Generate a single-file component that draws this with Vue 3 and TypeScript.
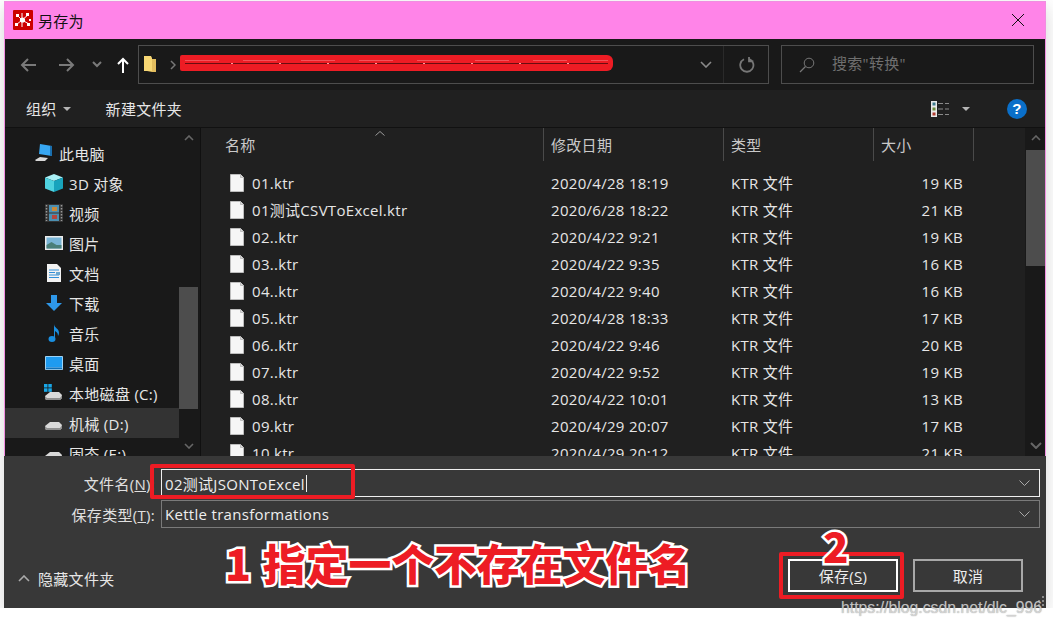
<template>
  <div class="window">
    <header class="titlebar">
      <svg class="app-icon" width="20" height="20" viewBox="0 0 20 20">
        <rect width="20" height="20" rx="1" fill="#cc0000" />
        <path d="M9 10 4 5M9 10l6-5M9 10l-6 5M9 10l7 4M9 10V3M9 10v7" stroke="#fff" stroke-width="1" />
        <g fill="#fff">
          <circle cx="9.500" cy="10" r="2.600" />
          <rect x="3" y="4" width="3" height="3" />
          <rect x="13" y="3" width="3" height="3" />
          <rect x="2" y="13" width="3" height="3" />
          <rect x="14" y="13" width="3" height="3" />
          <rect x="16" y="9" width="2" height="2" />
        </g>
      </svg>
      <span class="title">另存为</span>
      <svg class="close" width="14" height="14" viewBox="0 0 14 14">
        <path d="M1 1l12 12M13 1 1 13" stroke="#111" stroke-width="1" fill="none" />
      </svg>
    </header>

    <div class="navbar">
      <div class="nav-btns">
        <svg width="16" height="14" viewBox="0 0 16 14"><path d="M16 7H2M8 1 2 7l6 6" stroke="#7a7a7a" stroke-width="2" fill="none" /></svg>
        <svg class="fwd" width="16" height="14" viewBox="0 0 16 14"><path d="M0 7h14M8 1l6 6-6 6" stroke="#7a7a7a" stroke-width="2" fill="none" /></svg>
        <svg class="hist" width="10" height="7" viewBox="0 0 10 7"><path d="M1 1l4 4 4-4" stroke="#7a7a7a" stroke-width="2" fill="none" /></svg>
        <svg class="up" width="12" height="16" viewBox="0 0 12 16"><path d="M6 16V2M1 7l5-5 5 5" stroke="#fff" stroke-width="2" fill="none" /></svg>
      </div>
      <div class="address">
        <svg width="13" height="17" viewBox="0 0 13 17">
          <path d="M0 0h7l1 2v13H0z" fill="#f7d774" />
          <path d="M8 3h4v13H3l5-1z" fill="#e3bd5e" />
        </svg>
        <svg class="crumb" width="6" height="10" viewBox="0 0 6 10"><path d="M1 1l4 4-4 4" stroke="#777" stroke-width="1.500" fill="none" /></svg>
        <span class="addr-spacer"></span>
        <svg class="addr-drop" width="12" height="7" viewBox="0 0 12 7"><path d="M1 1l5 5 5-5" stroke="#8a8a8a" stroke-width="1.600" fill="none" /></svg>
        <span class="addr-sep"></span>
        <svg class="refresh" width="16" height="16" viewBox="0 0 16 16"><path d="M10.200 2A6.600 6.600 0 1 1 5 2.200M10 0v4.400H14.400" stroke="#777" stroke-width="1.800" fill="none" /></svg>
      </div>
      <div class="search">
        <svg width="16" height="16" viewBox="0 0 16 16"><circle cx="10" cy="6" r="4.800" stroke="#777" stroke-width="1" fill="none" /><path d="M6.500 9.500 1 15" stroke="#777" stroke-width="1.300" /></svg>
        <span>搜索"转换"</span>
      </div>
    </div>

    <div class="cmdbar">
      <span class="cmd">组织</span>
      <i class="caret"></i>
      <span class="cmd new-folder">新建文件夹</span>
      <span class="cmd-spacer"></span>
      <svg width="18" height="16" viewBox="0 0 18 16">
        <rect x="0" y="0" width="6" height="16" fill="#e8e8e8" />
        <rect x="1.500" y="1.500" width="3" height="3" fill="#3c7a8c" />
        <rect x="1.500" y="6.500" width="3" height="3" fill="#6b8a3c" />
        <rect x="1.500" y="11.500" width="3" height="3" fill="#b03a2e" />
        <path d="M7 2.500h5M14 2.500h4M7 8h5M14 8h4M7 13.500h5M14 13.500h4" stroke="#8a8a8a" stroke-width="1" />
      </svg>
      <i class="caret view-caret"></i>
      <span class="help">?</span>
    </div>

    <div class="main">
      <aside class="sidebar">
        <div class="tree">
          <div v-for="item in tree" :key="item.label" class="tree-row" :class="{ selected: item.selected, root: item.root }">
            <span class="tree-icon" v-html="icons[item.icon]"></span>
            <span>{{ item.label }}</span>
          </div>
        </div>
        <div class="scrollbar side-scroll">
          <svg class="arrow" width="10" height="6" viewBox="0 0 10 6"><path d="M1 5l4-4 4 4" stroke="#666" stroke-width="1.600" fill="none" /></svg>
          <div class="track"><div class="thumb"></div></div>
          <svg class="arrow" width="10" height="6" viewBox="0 0 10 6"><path d="M1 1l4 4 4-4" stroke="#666" stroke-width="1.600" fill="none" /></svg>
        </div>
      </aside>

      <section class="files">
        <div class="file-head">
          <svg class="sort" width="10" height="5" viewBox="0 0 10 5"><path d="M0.500 4.500 5 0.500l4.500 4" stroke="#999" fill="none" /></svg>
          <div class="col c-name">名称</div>
          <div class="col c-date">修改日期</div>
          <div class="col c-type">类型</div>
          <div class="col c-size">大小</div>
        </div>
        <div class="file-list">
          <div v-for="f in files" :key="f.name" class="file-row">
            <div class="c-name name-cell">
              <svg width="14" height="18" viewBox="0 0 14 18">
                <path d="M0.500 0.500h10l3 3v14H0.500z" fill="#f6f6f6" stroke="#bdbdbd" />
                <path d="M10.500 0.500v3h3" fill="#d8d8d8" stroke="#bdbdbd" />
              </svg>
              <span>{{ f.name }}</span>
            </div>
            <div class="c-date">{{ f.date }}</div>
            <div class="c-type">KTR 文件</div>
            <div class="c-size size-cell">{{ f.size }}</div>
          </div>
        </div>
      </section>

      <div class="scrollbar list-scroll">
        <svg class="arrow" width="10" height="6" viewBox="0 0 10 6"><path d="M1 5l4-4 4 4" stroke="#666" stroke-width="1.600" fill="none" /></svg>
        <div class="track"><div class="thumb"></div></div>
        <svg class="arrow" width="12" height="7" viewBox="0 0 12 7"><path d="M1 1l5 5 5-5" stroke="#666" stroke-width="2" fill="none" /></svg>
      </div>
    </div>

    <footer class="footer">
      <div class="form">
        <label>文件名(<u>N</u>):</label>
        <div class="field active">
          <span>02测试JSONToExcel</span><i class="cursor"></i>
          <svg width="11" height="6" viewBox="0 0 11 6"><path d="M0.500 0.500l5 5 5-5" stroke="#aaa" fill="none" /></svg>
        </div>
        <label>保存类型(<u>T</u>):</label>
        <div class="field">
          <span>Kettle transformations</span>
          <svg width="11" height="6" viewBox="0 0 11 6"><path d="M0.500 0.500l5 5 5-5" stroke="#aaa" fill="none" /></svg>
        </div>
      </div>
      <div class="actions">
        <svg class="hide-arrow" width="12" height="7" viewBox="0 0 12 7"><path d="M1 6l5-5 5 5" stroke="#aaa" stroke-width="1.600" fill="none" /></svg>
        <span class="hide-folders">隐藏文件夹</span>
        <span class="cmd-spacer"></span>
        <button class="btn primary">保存(<u>S</u>)</button>
        <button class="btn">取消</button>
      </div>
      <div class="grip"><i v-for="n in 6" :key="n" :class="'g' + n"></i></div>
    </footer>

    <!-- 截图上的标注 -->
    <div class="scribble">
      <i></i><i></i>
    </div>
    <div class="mark mark-name"></div>
    <div class="mark mark-save"></div>
    <div class="note note-1">1 指定一个不存在文件名</div>
    <div class="note note-2">2</div>
  </div>
  <div class="watermark">https://blog.csdn.net/dlc_996</div>
</template>

<script setup lang="ts">
type Row = { name: string; date: string; size: string }
type TreeItem = { label: string; icon: string; root?: boolean; selected?: boolean }

const files: Row[] = [
  { name: '01.ktr', date: '2020/4/28 18:19', size: '19 KB' },
  { name: '01测试CSVToExcel.ktr', date: '2020/6/28 18:22', size: '21 KB' },
  { name: '02..ktr', date: '2020/4/22 9:21', size: '19 KB' },
  { name: '03..ktr', date: '2020/4/22 9:35', size: '16 KB' },
  { name: '04..ktr', date: '2020/4/22 9:40', size: '16 KB' },
  { name: '05..ktr', date: '2020/4/28 18:33', size: '17 KB' },
  { name: '06..ktr', date: '2020/4/22 9:46', size: '20 KB' },
  { name: '07..ktr', date: '2020/4/22 9:52', size: '19 KB' },
  { name: '08..ktr', date: '2020/4/22 10:01', size: '13 KB' },
  { name: '09.ktr', date: '2020/4/29 20:07', size: '17 KB' },
  { name: '10.ktr', date: '2020/4/29 20:12', size: '21 KB' },
]

const tree: TreeItem[] = [
  { label: '此电脑', icon: 'pc', root: true },
  { label: '3D 对象', icon: 'cube' },
  { label: '视频', icon: 'film' },
  { label: '图片', icon: 'pic' },
  { label: '文档', icon: 'doc' },
  { label: '下载', icon: 'down' },
  { label: '音乐', icon: 'music' },
  { label: '桌面', icon: 'desk' },
  { label: '本地磁盘 (C:)', icon: 'sys' },
  { label: '机械 (D:)', icon: 'disk', selected: true },
  { label: '固态 (E:)', icon: 'disk' },
]

const disk = '<path d="M1 12l5-4h9l3 3v3l-2 2H3l-2-1z" fill="#d9d9d9"/><path d="M1 12l2 2h13l2-3v3l-2 2H3l-2-1z" fill="#8f8f8f"/>'

const icons: Record<string, string> = {
  pc: '<svg width="20" height="20" viewBox="0 0 20 20"><path d="M6 1l12 2v10L5 11z" fill="#38a7f2"/><path d="M16 3l2 0v10l-2 0z" fill="#1a6fae"/><path d="M1 17l5-3 8 1-3 3-9 0z" fill="#d8d8d8"/></svg>',
  cube: '<svg width="18" height="18" viewBox="0 0 18 18"><path d="M9 0l9 3.500L9 7 0 3.500z" fill="#a9f0f5"/><path d="M0 3.500L9 7v11l-9-3.500z" fill="#4fd2df"/><path d="M18 3.500L9 7v11l9-3.500z" fill="#18a3bd"/></svg>',
  film: '<svg width="18" height="18" viewBox="0 0 18 18"><rect width="18" height="18" fill="#333"/><rect x="4" y="1" width="10" height="7.500" fill="#4c8fb0"/><rect x="4" y="9.500" width="10" height="7.500" fill="#4c8fb0"/><rect x="7" y="3" width="5" height="4" fill="#c8893a"/><rect x="7" y="11" width="5" height="4" fill="#b2463e"/><path d="M1.500 1v16M16.500 1v16" stroke="#999" stroke-width="1.500" stroke-dasharray="1.500 1.500"/></svg>',
  pic: '<svg width="18" height="14" viewBox="0 0 18 14"><rect width="18" height="14" fill="#ececec"/><rect x="1.500" y="1.500" width="15" height="11" fill="#7ab5d6"/><path d="M1.500 9l5-3 5 3 5 0v3.500h-15z" fill="#4a7f78"/></svg>',
  doc: '<svg width="14" height="18" viewBox="0 0 14 18"><path d="M0 0h10l4 4v14H0z" fill="#f2f2f2"/><path d="M2 6h10M2 8.500h6M2 11h10M2 13.500h10" stroke="#2f8fd8" stroke-width="1.200"/><path d="M9 8h4v3H9z" fill="#6aa8d0"/></svg>',
  down: '<svg width="16" height="16" viewBox="0 0 16 16"><path d="M5 0h6v8h5l-8 8-8-8h5z" fill="#2e97e8"/></svg>',
  music: '<svg width="12" height="18" viewBox="0 0 12 18"><ellipse cx="4" cy="15" rx="3.500" ry="3" fill="#1a8fe0"/><path d="M6 15V0c0 4 5 4 5 9 0 1-.4 2-1 3 0-4-2-4-3-5v8z" fill="#1a8fe0"/></svg>',
  desk: '<svg width="18" height="14" viewBox="0 0 18 14"><rect width="18" height="14" rx="1" fill="#b9e2fb"/><rect x="0.800" y="0.800" width="16.400" height="10.500" fill="#1e9bf0"/><rect x="0.800" y="11.500" width="16.400" height="1.800" fill="#0f6fb5"/></svg>',
  sys: '<svg width="20" height="18" viewBox="0 0 20 18">' + disk + '<g fill="#18a7e8"><rect x="0" y="0" width="3.500" height="3.500"/><rect x="4.300" y="0" width="3.500" height="3.500"/><rect x="0" y="4.300" width="3.500" height="3.500"/><rect x="4.300" y="4.300" width="3.500" height="3.500"/></g></svg>',
  disk: '<svg width="20" height="18" viewBox="0 0 20 18">' + disk + '</svg>',
}
</script>

<style scoped>
.window {
  position: relative;
  width: 1042px;
  height: 607px;
  margin: 1px 0 0 4px;
  display: flex;
  flex-direction: column;
  background: #383838;
  box-shadow: 0 6px 18px rgba(0, 0, 0, 0.16);
  font-family: "Open Sans", "Noto Sans CJK SC", sans-serif;
  font-size: 15px;
  letter-spacing: 0.3px;
  color: #e6e6e6;
  overflow: visible;
  outline: 1px solid #f08ee0;
  outline-offset: -1px;
}
.titlebar {
  height: 38px;
  flex: none;
  display: flex;
  align-items: center;
  padding: 0 21px 0 9px;
  background: #ff84e8;
  color: #111;
}
.app-icon { margin-right: 5px; }
.close { margin-left: auto; }

.navbar {
  height: 51px;
  flex: none;
  display: flex;
  align-items: center;
  background: #191919;
  padding: 0 12px 0 0;
  box-sizing: border-box;
}
.nav-btns { width: 134px; flex: none; display: flex; align-items: center; padding-left: 16px; box-sizing: border-box; }
.fwd { margin-left: 23px; }
.hist { margin-left: 17px; }
.up { margin-left: 15px; }
.address {
  width: 631px;
  height: 39px;
  flex: none;
  box-sizing: border-box;
  border: 1px solid #4d4d4d;
  display: flex;
  align-items: center;
  padding-left: 5px;
}
.crumb { margin-left: 13px; }
.addr-spacer { flex: 1; }
.addr-drop { margin-right: 11px; }
.addr-sep { width: 1px; height: 37px; background: #2a2a2a; }
.refresh { margin: 0 13px 0 15px; }
.search {
  margin-left: 12px;
  flex: 1;
  height: 39px;
  box-sizing: border-box;
  border: 1px solid #4d4d4d;
  display: flex;
  align-items: center;
  gap: 17px;
  padding-left: 17px;
  color: #6f6f6f;
}
.search span { position: relative; top: -2px; }

.cmdbar {
  height: 38px;
  flex: none;
  display: flex;
  align-items: center;
  background: #202020;
  padding: 0 19px 0 22px;
  border-bottom: 1px solid #111;
  box-sizing: border-box;
}
.caret {
  width: 0;
  height: 0;
  margin-left: 6px;
  border-left: 4px solid transparent;
  border-right: 4px solid transparent;
  border-top: 4px solid #b5b5b5;
}
.new-folder { margin-left: 35px; }
.cmd-spacer { flex: 1; }
.view-caret { margin-left: 13px; margin-right: 37px; }
.help {
  width: 20px;
  height: 20px;
  border-radius: 50%;
  background: #0a6fc9;
  color: #fff;
  font: bold 15px/20px "Liberation Sans", sans-serif;
  text-align: center;
}

.main {
  height: 328px;
  flex: none;
  display: flex;
  overflow: hidden;
}
.sidebar {
  width: 197px;
  flex: none;
  display: flex;
  background: #191919;
  border-right: 1px solid #101010;
  box-sizing: border-box;
  padding-left: 1px;
}
.tree { flex: 1; min-width: 0; padding-top: 10px; overflow: hidden; }
.tree-row {
  height: 30px;
  display: flex;
  align-items: center;
  padding-left: 39px;
  gap: 5px;
  white-space: nowrap;
}
.tree-row.root { padding-left: 29px; }
.tree-row.selected { background: #333; }
.tree-icon { width: 20px; display: flex; justify-content: center; align-items: center; }
.scrollbar {
  width: 19px;
  flex: none;
  display: flex;
  flex-direction: column;
  align-items: center;
  background: #191919;
}
.side-scroll { margin-right: 2px; }
.arrow { flex: none; margin: 7px 0; }
.track { flex: 1; width: 100%; }
.side-scroll .track { padding-top: 139px; box-sizing: border-box; }
.side-scroll .thumb { height: 122px; background: #4d4d4d; }
.list-scroll { width: 21px; }
.list-scroll .track { padding-top: 2px; box-sizing: border-box; }
.list-scroll .thumb { height: 116px; background: #4d4d4d; margin: 0 1px; }

.files { flex: 1; min-width: 0; background: #202020; overflow: hidden; position: relative; }
.sort { position: absolute; left: 174px; top: 3px; }
.file-head { display: flex; height: 33px; padding-left: 15px; }
.col {
  box-sizing: border-box;
  height: 33px;
  padding: 6px 0 0 7px;
  border-right: 1px solid #4a4a4a;
  color: #c9c9c9;
}
.col.c-name { padding-left: 9px; }
.c-name { width: 328px; flex: none; }
.c-date { width: 180px; flex: none; }
.c-type { width: 150px; flex: none; }
.c-size { width: 100px; flex: none; }
.file-list { padding-top: 8px; }
.file-row {
  display: flex;
  height: 27px;
  align-items: center;
  padding-left: 15px;
  white-space: nowrap;
}
.file-row > .c-date, .file-row > .c-type { padding-left: 7px; box-sizing: border-box; }
.name-cell { display: flex; align-items: center; gap: 8px; padding-left: 14px; box-sizing: border-box; }
.size-cell { text-align: right; padding-right: 11px; box-sizing: border-box; }

.footer {
  flex: 1;
  position: relative;
  padding: 13px 6px 0 0;
  box-sizing: border-box;
  background: #383838;
}
.form {
  display: grid;
  grid-template-columns: 151px 1fr;
  column-gap: 6px;
  row-gap: 3px;
  align-items: center;
}
.form label { text-align: right; color: #e0e0e0; white-space: nowrap; }
.field {
  height: 28px;
  box-sizing: border-box;
  border: 1px solid #7a7a7a;
  display: flex;
  align-items: center;
  padding: 0 9px 0 3px;
  color: #eee;
}
.field.active { border-color: #f0f0f0; }
.field svg { margin-left: auto; }
.cursor { width: 1px; height: 17px; background: #eee; margin-left: 1px; }
.actions {
  display: flex;
  align-items: center;
  margin-top: 31px;
  padding: 0 17px 0 14px;
}
.hide-arrow { margin-top: 6px; }
.hide-folders { margin-left: 8px; margin-top: 6px; }
.btn {
  width: 110px;
  height: 33px;
  padding: 0;
  background: #383838;
  border: 2px solid #a8a8a8;
  color: #eee;
  font: inherit;
  letter-spacing: inherit;
}
.btn.primary { border-color: #fff; margin-right: 15px; width: 110px; }
.grip { position: absolute; right: 2px; bottom: 2px; width: 10px; height: 10px; }
.grip i { position: absolute; width: 2px; height: 2px; background: #8a8a8a; }
.g1 { right: 0; top: 0; }
.g2 { right: 0; top: 4px; }
.g3 { right: 4px; top: 4px; }
.g4 { right: 0; top: 8px; }
.g5 { right: 4px; top: 8px; }
.g6 { right: 8px; top: 8px; }

.scribble {
  position: absolute;
  left: 176px;
  top: 54px;
  width: 433px;
  height: 16px;
  background: #ed1c24;
  border-radius: 2px 6px 6px 2px;
}
.scribble i { position: absolute; left: 5px; right: 5px; height: 1px; }
.scribble i:first-child { top: 5px; background: repeating-linear-gradient(90deg, #f4525a 0 34px, transparent 34px 58px); }
.scribble i:last-child { top: 8px; background: repeating-linear-gradient(90deg, #6a0c10 0 46px, #ff9a9e 46px 48px); }
.mark { position: absolute; border: 4px solid #ed1c24; border-radius: 2px; box-sizing: border-box; }
.mark-name { left: 146px; top: 463px; width: 205px; height: 35px; }
.mark-save { left: 775px; top: 551px; width: 125px; height: 47px; }
.note {
  position: absolute;
  font-family: "Noto Sans CJK SC", sans-serif;
  font-weight: 900;
  color: #ed1c24;
  letter-spacing: 0;
  -webkit-text-stroke: 5px #fff;
  paint-order: stroke fill;
  white-space: nowrap;
  line-height: 1;
}
.note-1 { left: 221px; top: 540px; font-size: 42.800px; word-spacing: 2px; }
.note-2 { left: 819px; top: 523px; font-size: 42px; }
.watermark {
  position: absolute;
  left: 841px;
  top: 599px;
  font: 15.800px "Liberation Sans", sans-serif;
  color: rgba(225, 225, 225, 0.8);
  text-shadow: 0 0 1px rgba(90, 90, 90, 0.7);
  white-space: nowrap;
}
</style>

<style>
html, body { background: #fff; overflow: hidden; }
</style>
